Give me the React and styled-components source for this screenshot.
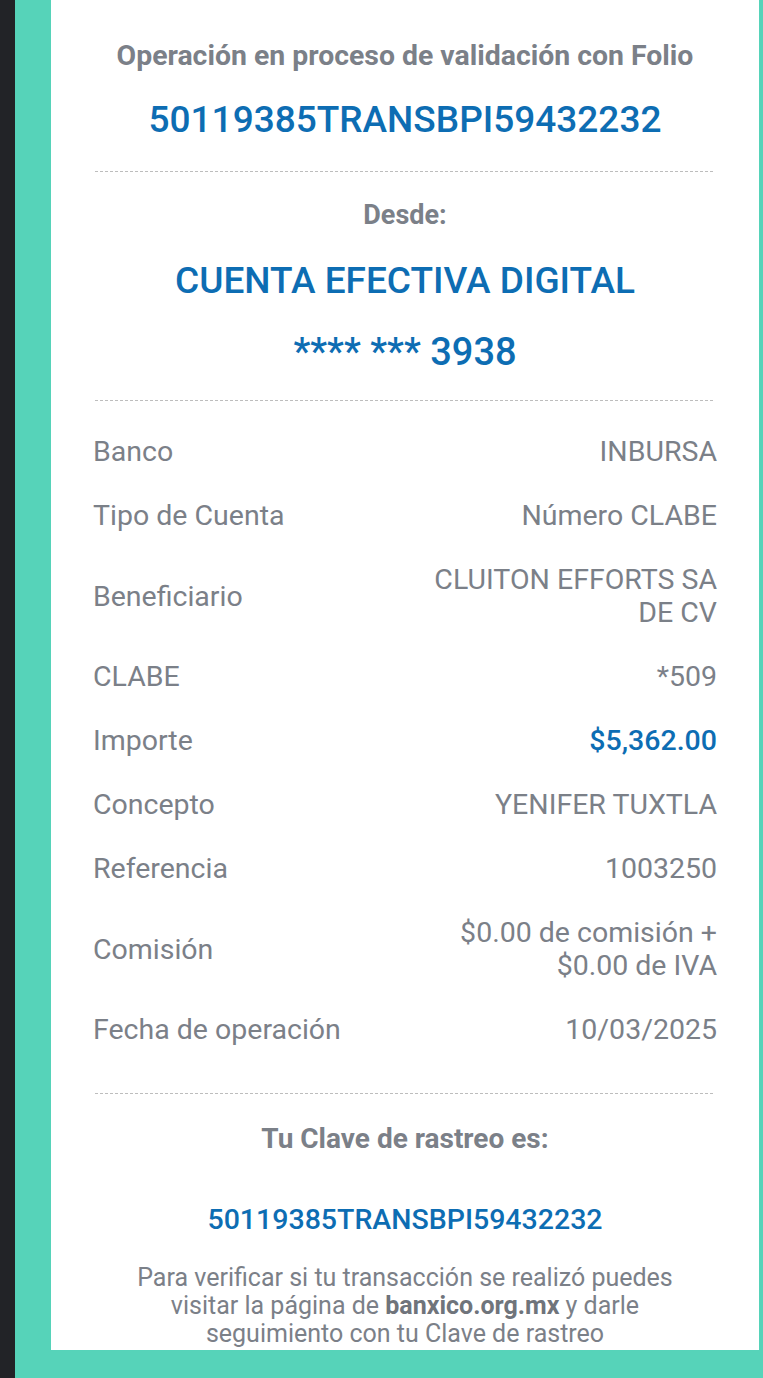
import React from 'react';
import styled, { createGlobalStyle } from 'styled-components';

const GlobalStyle = createGlobalStyle`
  html, body {
    margin: 0;
    padding: 0;
  }
  body {
    background: #56d3b9;
    border-left: 15px solid #222327;
    min-height: 1378px;
    box-sizing: border-box;
    font-family: Roboto, "Noto Sans", sans-serif;
  }
`;

const Page = styled.div`
  display: flex;
  padding: 0 4px 28px 36px;
`;

const Card = styled.div`
  flex: 1;
  background: #ffffff;
  padding: 0 42px;
  height: 1350px;
  box-sizing: border-box;
  display: flex;
  flex-direction: column;
`;

const Heading = styled.div`
  text-align: center;
  color: #7b8088;
  font-weight: ${p => p.weight || 700};
  font-size: ${p => p.size || 27}px;
  line-height: 34px;
  margin-top: ${p => p.top || 0}px;
`;

const BlueLine = styled.div`
  text-align: center;
  color: #0d6db3;
  font-weight: 500;
  font-size: ${p => p.size || 37}px;
  line-height: 40px;
  margin-top: ${p => p.top || 0}px;
`;

const Dashed = styled.div`
  height: 1px;
  margin: ${p => p.top || 0}px 2px 0 2px;
  background-image: repeating-linear-gradient(to right, #bdbdbd 0 3px, transparent 3px 5px);
`;

const Rows = styled.div`
  margin-top: 19px;
  display: flex;
  flex-direction: column;
`;

const Row = styled.div`
  display: flex;
  justify-content: space-between;
  align-items: center;
  padding: 15px 0 16px;
  font-size: 28.5px;
  line-height: 33px;
  color: #7b8088;
`;

const Label = styled.span`
  flex: none;
`;

const Value = styled.span`
  text-align: right;
  max-width: 300px;
  color: ${p => (p.blue ? '#0d6db3' : '#7b8088')};
  font-weight: ${p => (p.blue ? 500 : 400)};
`;

const Note = styled.p`
  margin: 24px auto 0;
  max-width: 560px;
  text-align: center;
  color: #7b8088;
  font-size: 25px;
  line-height: 28px;

  b {
    font-weight: 700;
    color: #6f747b;
  }
`;

const rows = [
  ['Banco', 'INBURSA'],
  ['Tipo de Cuenta', 'Número CLABE'],
  ['Beneficiario', 'CLUITON EFFORTS SA DE CV'],
  ['CLABE', '*509'],
  ['Importe', '$5,362.00', true],
  ['Concepto', 'YENIFER TUXTLA'],
  ['Referencia', '1003250'],
  ['Comisión', '$0.00 de comisión + $0.00 de IVA'],
  ['Fecha de operación', '10/03/2025'],
];

export default function App() {
  return (
    <>
      <GlobalStyle />
      <Page>
        <Card>
          <Heading size={28.4} top={39}>Operación en proceso de validación con Folio</Heading>
          <BlueLine top={27}>50119385TRANSBPI59432232</BlueLine>
          <Dashed top={31} />
          <Heading top={26}>Desde:</Heading>
          <BlueLine top={29}>CUENTA EFECTIVA DIGITAL</BlueLine>
          <BlueLine size={38} top={31}>**** *** 3938</BlueLine>
          <Dashed top={28} />
          <Rows>
            {rows.map(([label, value, blue]) => (
              <Row key={label}>
                <Label>{label}</Label>
                <Value blue={blue}>{value}</Value>
              </Row>
            ))}
          </Rows>
          <Dashed top={31} />
          <Heading size={28} top={28}>Tu Clave de rastreo es:</Heading>
          <BlueLine size={28.5} top={44}>50119385TRANSBPI59432232</BlueLine>
          <Note>
            Para verificar si tu transacción se realizó puedes visitar la página de{' '}
            <b>banxico.org.mx</b> y darle seguimiento con tu Clave de rastreo
          </Note>
        </Card>
      </Page>
    </>
  );
}
